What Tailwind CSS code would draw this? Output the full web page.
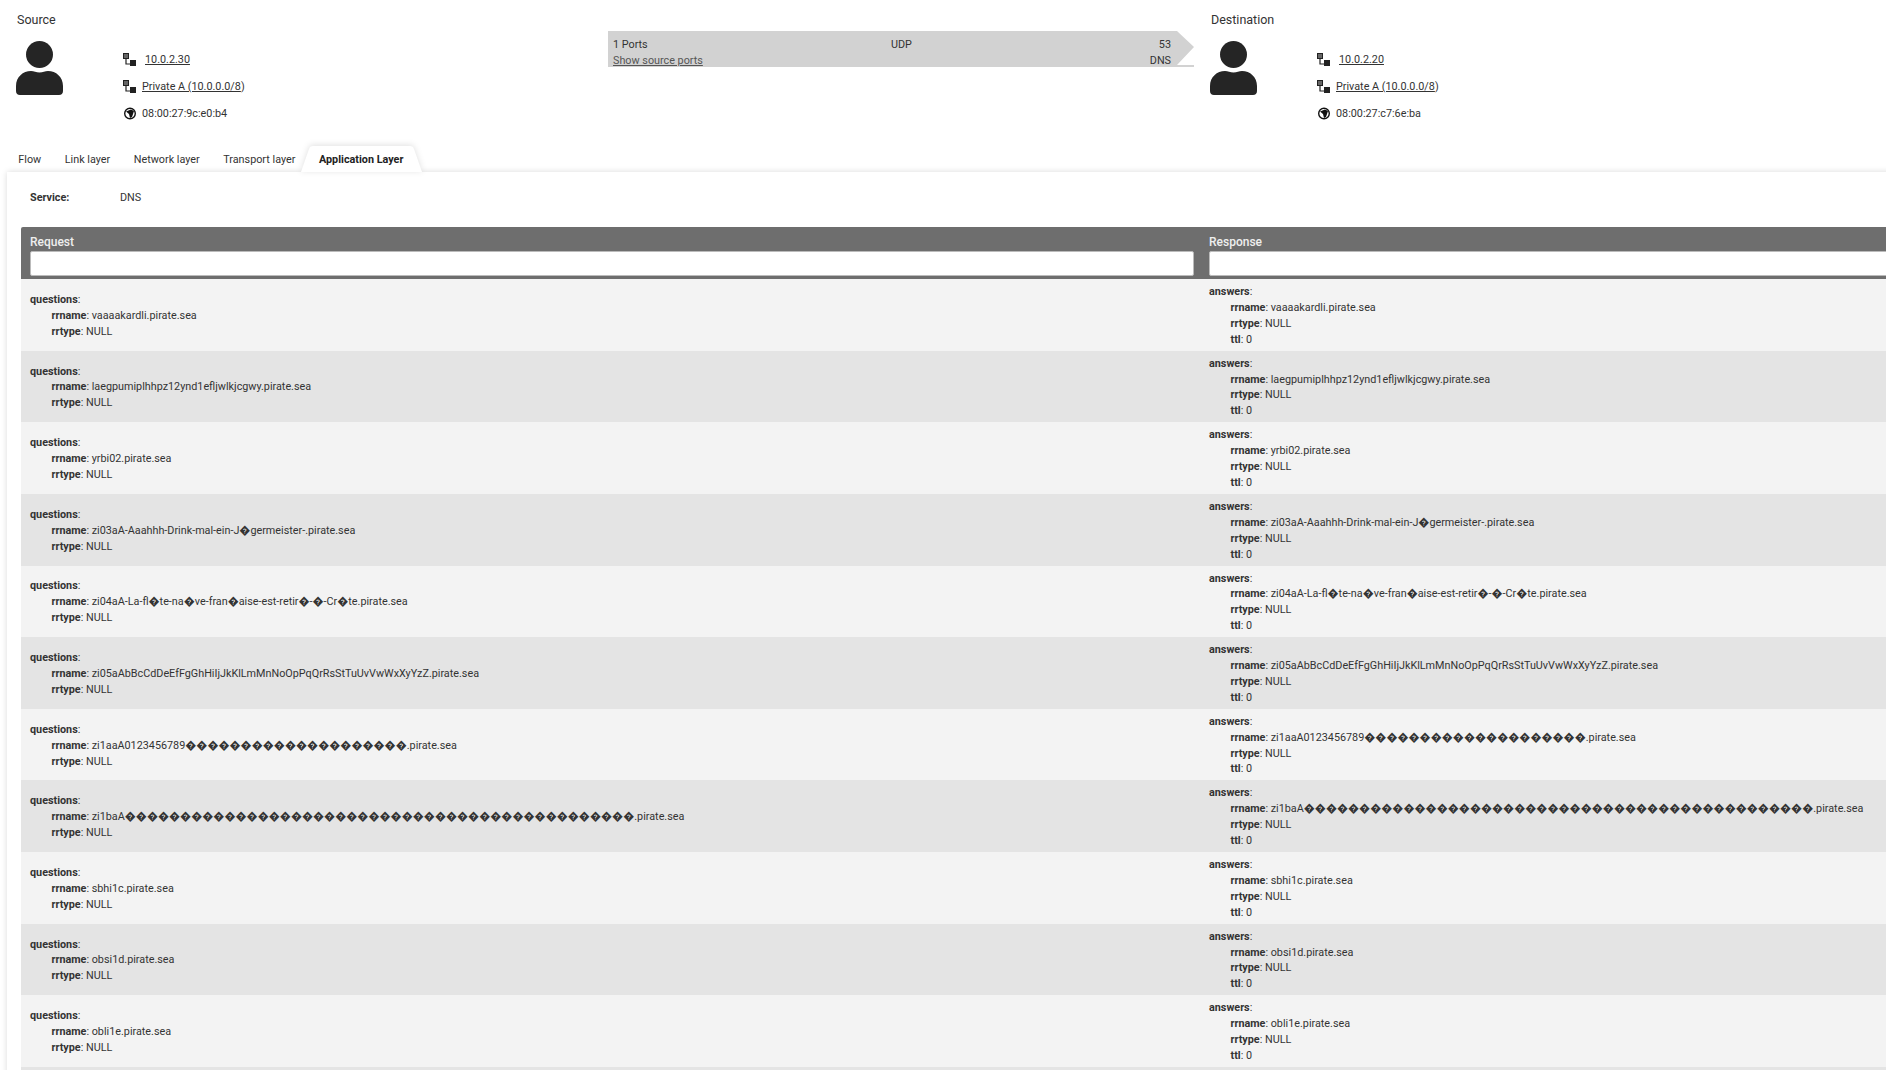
<!DOCTYPE html>
<html lang="en">

<head>
    <meta charset="UTF-8">
    <meta name="viewport" content="width=device-width, initial-scale=1.0">
    <title>Flow details</title>
    <script src="https://cdn.jsdelivr.net/npm/@tailwindcss/browser@4"></script>
</head>

<body class="h-screen overflow-hidden bg-white text-[10.8px] leading-[16px] text-[#333] font-[Roboto,'DejaVu_Sans',sans-serif]">
    <!-- hosts and flow bar -->
    <div class="flex h-[146px] items-start">
        <div class="w-[608px] shrink-0 pl-[17px] pt-[12px]">
            <div class="text-[12.5px] text-[#333]">Source</div>
            <div class="mt-[13px] flex">
                <svg class="-ml-[1px] h-[54px] w-[47px] shrink-0 text-[#252525]" viewBox="0 0 47 54" fill="currentColor"><circle cx="23.5" cy="13.5" r="13.5"/><path d="M0 45C0 36 7 30 15 30c3 0 5 1.500 8.500 1.500S29 30 32 30c8 0 15 6 15 15v5c0 2.500-1.500 4-4 4H4c-2.500 0-4-1.500-4-4z"/></svg>
                <div class="ml-[60px] pt-[5px]">
                    <div class="flex h-[27px] items-center">
                        <svg class="h-[13px] w-[14px] shrink-0" viewBox="0 0 14 13"><rect x="0.500" y="0.500" width="5" height="5" fill="#666" stroke="#222"/><path d="M3 6v5h4" fill="none" stroke="#222" stroke-width="1.200"/><rect x="7" y="7" width="6" height="6" fill="#222"/></svg>
                        <a href="#" class="ml-[8px] underline">10.0.2.30</a>
                    </div>
                    <div class="flex h-[27px] items-center">
                        <svg class="h-[13px] w-[14px] shrink-0" viewBox="0 0 14 13"><rect x="0.500" y="0.500" width="5" height="5" fill="#666" stroke="#222"/><path d="M3 6v5h4" fill="none" stroke="#222" stroke-width="1.200"/><rect x="7" y="7" width="6" height="6" fill="#222"/></svg>
                        <span class="ml-[5px]"><a href="#" class="underline">Private A (10.0.0.0/8</a>)</span>
                    </div>
                    <div class="flex h-[27px] items-center">
                        <svg class="h-[13px] w-[14px] shrink-0" viewBox="0 0 14 13"><circle cx="7" cy="6.500" r="5.300" fill="#fff" stroke="#111" stroke-width="1.400"/><path d="M3 4.500 8 2.500l3 1.500-2 6-2 1-1-4z" fill="#111"/></svg>
                        <span class="ml-[5px]">08:00:27:9c:e0:b4</span>
                    </div>
                </div>
            </div>
        </div>

        <div class="mt-[31px] h-[36px] w-[586px] shrink-0 bg-[#d2d2d2] pl-[5px] pr-[23px] pt-[6px] [clip-path:polygon(0_0,569px_0,586px_16px,569px_34px,586px_34px,586px_36px,0_36px)]">
            <div class="relative flex justify-between">
                <span>1 Ports</span>
                <span class="absolute left-[278px]">UDP</span>
                <span>53</span>
            </div>
            <div class="flex justify-between">
                <a href="#" class="underline text-[#555]">Show source ports</a>
                <span>DNS</span>
            </div>
        </div>

        <div class="flex-1 pl-[17px] pt-[12px]">
            <div class="text-[12.5px] text-[#333]">Destination</div>
            <div class="mt-[13px] flex">
                <svg class="-ml-[1px] h-[54px] w-[47px] shrink-0 text-[#252525]" viewBox="0 0 47 54" fill="currentColor"><circle cx="23.5" cy="13.5" r="13.5"/><path d="M0 45C0 36 7 30 15 30c3 0 5 1.500 8.500 1.500S29 30 32 30c8 0 15 6 15 15v5c0 2.500-1.500 4-4 4H4c-2.500 0-4-1.500-4-4z"/></svg>
                <div class="ml-[60px] pt-[5px]">
                    <div class="flex h-[27px] items-center">
                        <svg class="h-[13px] w-[14px] shrink-0" viewBox="0 0 14 13"><rect x="0.500" y="0.500" width="5" height="5" fill="#666" stroke="#222"/><path d="M3 6v5h4" fill="none" stroke="#222" stroke-width="1.200"/><rect x="7" y="7" width="6" height="6" fill="#222"/></svg>
                        <a href="#" class="ml-[8px] underline">10.0.2.20</a>
                    </div>
                    <div class="flex h-[27px] items-center">
                        <svg class="h-[13px] w-[14px] shrink-0" viewBox="0 0 14 13"><rect x="0.500" y="0.500" width="5" height="5" fill="#666" stroke="#222"/><path d="M3 6v5h4" fill="none" stroke="#222" stroke-width="1.200"/><rect x="7" y="7" width="6" height="6" fill="#222"/></svg>
                        <span class="ml-[5px]"><a href="#" class="underline">Private A (10.0.0.0/8</a>)</span>
                    </div>
                    <div class="flex h-[27px] items-center">
                        <svg class="h-[13px] w-[14px] shrink-0" viewBox="0 0 14 13"><circle cx="7" cy="6.500" r="5.300" fill="#fff" stroke="#111" stroke-width="1.400"/><path d="M3 4.500 8 2.500l3 1.500-2 6-2 1-1-4z" fill="#111"/></svg>
                        <span class="ml-[5px]">08:00:27:c7:6e:ba</span>
                    </div>
                </div>
            </div>
        </div>
    </div>

    <!-- tabs -->
    <div class="relative z-10 flex h-[26px] items-center pl-[6.5px] pt-[2px]">
        <a href="#" class="px-[11.8px]">Flow</a>
        <a href="#" class="px-[11.8px]">Link layer</a>
        <a href="#" class="px-[11.8px]">Network layer</a>
        <a href="#" class="px-[11.8px]">Transport layer</a>
        <a href="#" class="relative px-[11.8px] font-bold text-[#222]">
            <!-- active tab shape -->
            <svg class="absolute -top-[6px] -left-[6.5px] -z-10 h-[26px] w-[121px] drop-shadow-[0_-1px_3px_rgba(0,0,0,0.12)]" viewBox="0 0 121 26"><path d="M0 26 8 3Q9 0 12 0H109Q112 0 113 3L121 26Z" fill="#fff"/></svg>
            Application Layer
        </a>
    </div>

    <!-- card -->
    <div class="ml-[7px] w-[2500px] bg-white pl-[14px] shadow-[0_0_6px_rgba(0,0,0,0.15)]">
        <div class="flex h-[55px] pt-[18px] pl-[9px]">
            <span class="w-[90px] font-bold">Service:</span>
            <span>DNS</span>
        </div>
        <table class="w-[2360px] table-fixed border-collapse">
            <thead>
                <tr class="bg-[#6e6e6e] text-left text-[12px] text-[#eee]">
                    <th class="rounded-tl-[2px] pb-[3px] pl-[9px] pr-[7px] pt-[7px] font-medium">
                        <div class="leading-[17px]">Request</div>
                        <input type="text" class="block h-[25px] w-full rounded-[2px] border border-[#bbb] bg-white">
                    </th>
                    <th class="pb-[3px] pl-[8px] pt-[7px] font-medium">
                        <div class="leading-[17px]">Response</div>
                        <input type="text" class="block h-[25px] w-full rounded-[2px] border border-[#bbb] bg-white">
                    </th>
                </tr>
            </thead>
            <tbody id="rows"></tbody>
        </table>
    </div>

    <script>
        const names = [
            "vaaaakardli.pirate.sea",
            "laegpumiplhhpz12ynd1efljwlkjcgwy.pirate.sea",
            "yrbi02.pirate.sea",
            "zi03aA-Aaahhh-Drink-mal-ein-J\uFFFDgermeister-.pirate.sea",
            "zi04aA-La-fl\uFFFDte-na\uFFFDve-fran\uFFFDaise-est-retir\uFFFD-\uFFFD-Cr\uFFFDte.pirate.sea",
            "zi05aAbBcCdDeEfFgGhHiIjJkKlLmMnNoOpPqQrRsStTuUvVwWxXyYzZ.pirate.sea",
            "zi1aaA0123456789" + "\uFFFD".repeat(20) + ".pirate.sea",
            "zi1baA" + "\uFFFD".repeat(46) + ".pirate.sea",
            "sbhi1c.pirate.sea",
            "obsi1d.pirate.sea",
            "obli1e.pirate.sea"
        ];

        let str = "";
        names.forEach((name, index) => {
            const bg = index % 2 === 0 ? "bg-[#f3f3f3]" : "bg-[#e4e4e4]";
            str += `
            <tr class="${bg} leading-[15.91px]">
                <td class="pb-[3px] pl-[9px] pt-[5px] align-middle">
                    <div><b>questions</b>:</div>
                    <div class="pl-[21.5px]"><b>rrname</b>: ${name}</div>
                    <div class="pl-[21.5px]"><b>rrtype</b>: NULL</div>
                </td>
                <td class="pb-[3px] pl-[8px] pt-[5px] align-middle">
                    <div><b>answers</b>:</div>
                    <div class="pl-[21.5px]"><b>rrname</b>: ${name}</div>
                    <div class="pl-[21.5px]"><b>rrtype</b>: NULL</div>
                    <div class="pl-[21.5px]"><b>ttl</b>: 0</div>
                </td>
            </tr>`;
        });
        // next row starts at the very bottom of the window, only its background shows
        str += `<tr class="bg-[#e4e4e4]"><td class="h-[72px]" colspan="2"></td></tr>`;
        document.getElementById("rows").innerHTML = str;
    </script>
</body>

</html>
